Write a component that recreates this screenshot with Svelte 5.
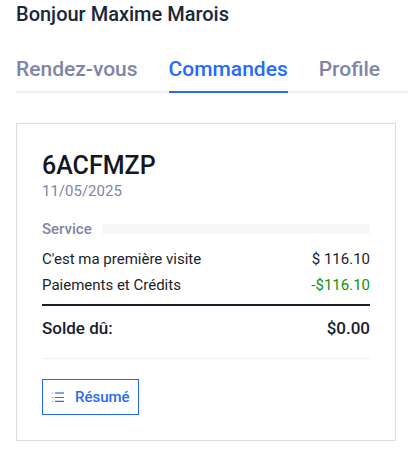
<script>
  let activeTab = 'orders'

  const tabs = [
    { id: 'appointments', label: 'Rendez-vous' },
    { id: 'orders', label: 'Commandes' },
    { id: 'profile', label: 'Profile' }
  ]

  const order = {
    code: '6ACFMZP',
    date: '11/05/2025',
    items: [{ name: "C'est ma première visite", price: '$ 116.10' }],
    payments: '$116.10',
    balance: '$0.00'
  }
</script>

<main>
  <h1>Bonjour Maxime Marois</h1>

  <nav>
    {#each tabs as tab (tab.id)}
      <button
        type="button"
        class="tab"
        class:active={activeTab === tab.id}
        on:click={() => (activeTab = tab.id)}>{tab.label}</button
      >
    {/each}
  </nav>

  <article class="card">
    <h2>{order.code}</h2>
    <p class="date">{order.date}</p>

    <div class="section"><span>Service</span></div>

    <table>
      <tbody>
        {#each order.items as item}
          <tr>
            <th scope="row">{item.name}</th>
            <td>{item.price}</td>
          </tr>
        {/each}
        <tr>
          <th scope="row">Paiements et Crédits</th>
          <td class="credit">-{order.payments}</td>
        </tr>
      </tbody>
      <tfoot>
        <tr>
          <th scope="row">Solde dû:</th>
          <td>{order.balance}</td>
        </tr>
      </tfoot>
    </table>

    <div class="actions">
      <button type="button" class="outline">
        <svg viewBox="0 0 13 10" width="13" height="10" aria-hidden="true">
          <path d="M0.5 1h2M0.5 5.5h2M0.5 9.5h2" opacity="0.5" />
          <path d="M4 1h9" stroke-width="2" opacity="0.6" />
          <path d="M4 5.5h9M4 9.4h9" stroke-width="1.2" />
        </svg>
        Résumé
      </button>
    </div>
  </article>
</main>

<style>
  :global(body) {
    margin: 0;
    background: #fff;
  }
  main {
    padding-left: 16px;
    font-family: Roboto, 'Liberation Sans', sans-serif;
    color: #1b1d2b;
  }
  h1,
  h2,
  p {
    margin: 0;
  }
  h1 {
    font-size: 20px;
    line-height: 28px;
    font-weight: 500;
    color: #1c2638;
  }
  button {
    font-family: inherit;
    background: none;
    cursor: pointer;
  }

  nav {
    display: flex;
    gap: 31px;
    margin-top: 27px;
    box-shadow: inset 0 -2px #f0f0f0;
  }
  .tab {
    padding: 0 0 8px;
    border: none;
    border-bottom: 2px solid transparent;
    font-size: 21px;
    line-height: 28px;
    font-weight: 500;
    color: #7f85a8;
  }
  .tab.active {
    border-color: #246bfd;
    color: #246bfd;
  }

  .card {
    margin: 30px 12px 30px 0;
    padding: 25px;
    border: 1px solid #dcdcdc;
  }
  h2 {
    font-size: 25px;
    line-height: 34px;
    font-weight: 500;
    color: #14171f;
  }
  .date {
    font-size: 15px;
    line-height: 16px;
    color: #7f85a8;
  }
  .section {
    display: flex;
    align-items: center;
    gap: 10px;
    margin-top: 20px;
    font-size: 15px;
    line-height: 20px;
    font-weight: 500;
    color: #7f85a8;
  }
  .section::after {
    content: '';
    flex: 1;
    height: 10px;
    background: #f7f7f7;
  }

  table {
    width: 100%;
    margin-top: 7px;
    border-collapse: collapse;
    font-size: 15px;
    line-height: 26px;
  }
  th,
  td {
    padding: 0;
    font-weight: 400;
    text-align: left;
  }
  td {
    text-align: right;
  }
  .credit {
    color: #0d930d;
  }
  tbody tr:last-child > * {
    padding-bottom: 6px;
    border-bottom: 2px solid #1b1d2b;
  }
  tfoot th,
  tfoot td {
    padding: 9px 0 17px;
    font-size: 17px;
    font-weight: 500;
  }

  .actions {
    padding-top: 20px;
    border-top: 1px solid #f0f0f0;
  }
  .outline {
    display: flex;
    align-items: center;
    gap: 11px;
    height: 36px;
    padding: 0 8px;
    border: 1px solid #246bfd;
    font-size: 15px;
    font-weight: 500;
    color: #246bfd;
  }
  .outline svg {
    fill: none;
    stroke: currentColor;
  }
</style>
